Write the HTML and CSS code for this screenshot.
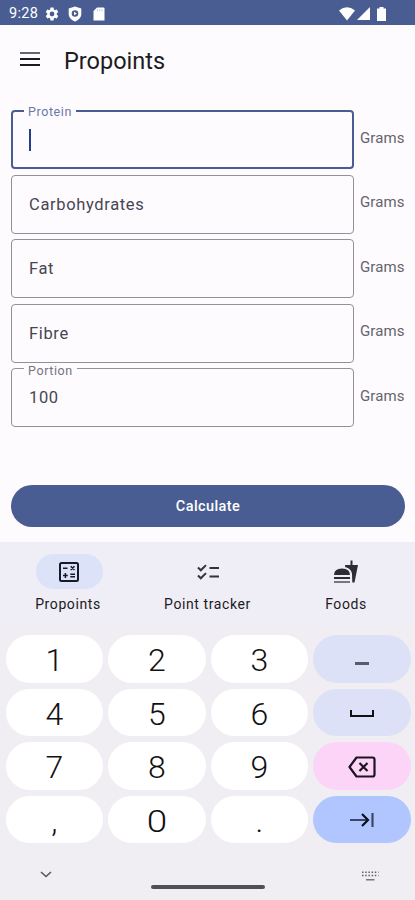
FILE: index.html
```html
<!DOCTYPE html>
<html lang="en">
<head>
    <meta charset="UTF-8">
    <meta name="viewport" content="width=device-width, initial-scale=1.0">
    <title>Propoints</title>
    <link rel="stylesheet" href="styles.css">
</head>
<body>

<div class="status-bar">
    <span class="clock">9:28</span>
    <svg class="gear" width="16" height="16" viewBox="0 0 24 24" fill="#fff"><path d="M19.14 12.94c.04-.3.06-.61.06-.94s-.02-.64-.07-.94l2.03-1.58a.5.5 0 0 0 .12-.61l-1.92-3.32a.5.5 0 0 0-.59-.22l-2.39.96c-.5-.38-1.03-.7-1.62-.94l-.36-2.54a.48.48 0 0 0-.48-.41h-3.84a.48.48 0 0 0-.47.41l-.36 2.54c-.59.24-1.13.57-1.62.94l-2.39-.96a.5.5 0 0 0-.59.22L2.74 8.87a.5.5 0 0 0 .12.61l2.03 1.58c-.05.3-.09.63-.09.94s.02.64.07.94l-2.03 1.58a.5.5 0 0 0-.12.61l1.92 3.32c.12.22.37.29.59.22l2.39-.96c.5.38 1.03.7 1.62.94l.36 2.54c.05.24.24.41.48.41h3.84c.24 0 .44-.17.47-.41l.36-2.54c.59-.24 1.13-.56 1.62-.94l2.39.96c.22.08.47 0 .59-.22l1.92-3.32a.5.5 0 0 0-.12-.61l-2.01-1.58zM12 15.6a3.6 3.6 0 1 1 0-7.2 3.6 3.6 0 0 1 0 7.2z"/></svg>
    <svg class="shield" width="14" height="16" viewBox="0 0 14 16"><path fill="#fff" d="M7 0.5L13.3 2.6V8C13.3 11.5 10.500 14.300 7 15.500C3.500 14.300 0.700 11.500 0.700 8V2.600Z"/><circle cx="7" cy="7.500" r="3.300" fill="#495d92"/><path fill="#fff" d="M6 5.800L9 7.500L6 9.200Z"/></svg>
    <svg class="card" width="12" height="14" viewBox="0 0 12 14"><path fill="#fff" d="M4 0.500H10.500Q11.500 0.500 11.500 1.500V13.500H0.500V4Z"/><path stroke="#c9d0e3" stroke-width="1" d="M4.500 2V4.500M6.800 2V4.500M9 2V4.500"/></svg>
    <div class="status-right">
        <svg width="16" height="14" viewBox="0 0 16 14"><path fill="#fff" d="M0 3.500Q8 -2.800 16 3.500L8 13.500Z"/></svg>
        <svg width="13" height="13" viewBox="0 0 13 13"><path fill="#fff" d="M13 0V13H0Z"/></svg>
        <svg class="battery" width="9" height="14" viewBox="0 0 9 14"><path fill="#fff" d="M2.500 0H6.500V1.500H9V14H0V1.500H2.500Z"/></svg>
    </div>
</div>

<header class="toolbar">
    <svg width="20" height="14" viewBox="0 0 20 14" fill="#1b1b21"><path fill="#66666c" d="M0 0h20v2H0z"/><path d="M0 6h20v2H0zM0 12h20v2H0z"/></svg>
    <h1>Propoints</h1>
</header>

<main class="form">
    <div class="form-row">
        <div class="field active"><label>Protein</label><span class="caret"></span></div>
        <span class="unit">Grams</span>
    </div>
    <div class="form-row">
        <div class="field">Carbohydrates</div>
        <span class="unit">Grams</span>
    </div>
    <div class="form-row">
        <div class="field">Fat</div>
        <span class="unit">Grams</span>
    </div>
    <div class="form-row">
        <div class="field">Fibre</div>
        <span class="unit">Grams</span>
    </div>
    <div class="form-row">
        <div class="field"><label>Portion</label>100</div>
        <span class="unit">Grams</span>
    </div>
    <button class="calculate">Calculate</button>
</main>

<nav class="bottom-nav">
    <div class="nav-item selected">
        <span class="nav-icon">
            <svg width="20" height="20" viewBox="0 0 20 20" fill="none" stroke="#161b2c"><rect x="1" y="1" width="18" height="18" rx="1.500" stroke-width="2"/><path stroke-width="1.500" d="M4 6.300h4.500M11.700 4.200l3.800 3.800M15.500 4.200l-3.800 3.800M4 13.500h4.800M6.400 11.100v4.800M11.300 12.300h4.700M11.300 14.700h4.700"/></svg>
        </span>
        <span class="nav-label">Propoints</span>
    </div>
    <div class="nav-item tracker">
        <span class="nav-icon">
            <svg width="22" height="16" viewBox="0 0 22 16" fill="none" stroke="#33333a" stroke-width="2"><path d="M1 3.500l2.800 2.800L9 1.100M1 11.500l2.800 2.800L9 9.100M12.500 4H22M12.500 12.500H22"/></svg>
        </span>
        <span class="nav-label">Point tracker</span>
    </div>
    <div class="nav-item foods">
        <span class="nav-icon">
            <svg width="24" height="24" viewBox="0 0 24 24" fill="#2c2c33"><path d="M0 15Q0 8.500 8 8.500T16 15z"/><path d="M0 17h16v2H0z"/><path fill="#77777e" d="M0 21h16v2H0z"/><path d="M18.300 22.500H20.500L24 5H18.500V0.500H16.500V5H11L11.300 7.300C15 8 17.700 10.500 18 14z"/></svg>
        </span>
        <span class="nav-label">Foods</span>
    </div>
</nav>

<section class="keyboard">
    <div class="keys">
        <div class="key">1</div>
        <div class="key">2</div>
        <div class="key">3</div>
        <div class="key tonal minus"><svg width="14" height="3" viewBox="0 0 14 3"><path fill="#575c6f" d="M0 0h14v3H0z"/></svg></div>
        <div class="key">4</div>
        <div class="key">5</div>
        <div class="key">6</div>
        <div class="key tonal"><svg class="space" width="24" height="7" viewBox="0 0 24 7"><path fill="none" stroke="#111" stroke-width="2" d="M1 0v6h22V0"/></svg></div>
        <div class="key">7</div>
        <div class="key">8</div>
        <div class="key">9</div>
        <div class="key delete"><svg width="28" height="22" viewBox="0 0 28 22" fill="none" stroke="#1d1420" stroke-width="2.200"><path stroke-linejoin="round" d="M8.500 1.500H24.500Q26.500 1.500 26.500 3.500V18.500Q26.500 20.500 24.500 20.500H8.500L1.500 11Z"/><path d="M11.500 7l8 8M19.500 7l-8 8"/></svg></div>
        <div class="key">,</div>
        <div class="key zero"><span>0</span></div>
        <div class="key">.</div>
        <div class="key next"><svg width="24" height="14" viewBox="0 0 24 14" fill="none" stroke-width="2.200"><path stroke="#3c4766" d="M0 7h17M22.500 0v14"/><path stroke="#0b1020" d="M12 1l6 6-6 6"/></svg></div>
    </div>
    <div class="system-bar">
        <svg width="12" height="7" viewBox="0 0 12 7"><path fill="none" stroke="#55555a" stroke-width="1.500" d="M1 1l5 4.500L11 1"/></svg>
        <div class="home-handle"></div>
        <svg width="18" height="10" viewBox="0 0 18 10"><path stroke="#606066" stroke-width="1.500" stroke-dasharray="1.500 1.700" d="M1 1.200h16.500M1 4.500h16.500"/><path stroke="#606066" stroke-width="1.300" d="M5 8.800h8.500"/></svg>
    </div>
</section>

</body>
</html>
```

FILE: styles.css
```css
body {
    font-family: Roboto, sans-serif;
    margin: 0;
    height: 900px;
    display: flex;
    flex-direction: column;
    background-color: #fefbff;
    color: #1b1b21;
    overflow: hidden;
}
svg {
    display: block;
    flex: none;
}
.status-bar {
    height: 25px;
    box-sizing: border-box;
    padding: 2px 29px 0 9px;
    display: flex;
    align-items: center;
    background-color: #495d92;
    color: white;
}
.clock {
    width: 35px;
    font-size: 14.5px;
    letter-spacing: 0.3px;
}
.shield {
    margin-left: 8px;
}
.card {
    margin-left: 11px;
}
.status-right {
    margin-left: auto;
    display: flex;
    align-items: center;
    gap: 2px;
}
.battery {
    margin-left: 5px;
}
.toolbar {
    height: 85px;
    box-sizing: border-box;
    padding: 20px 20px 0;
    display: flex;
    align-items: flex-start;
}
.toolbar svg {
    margin-top: 7px;
}
.toolbar h1 {
    margin: 0 0 0 24px;
    font-size: 23.5px;
    font-weight: 380;
    line-height: 32px;
    letter-spacing: 0;
}
.form {
    height: 432px;
    padding: 0 10px 0 11px;
}
.form-row {
    height: 64.5px;
    display: flex;
}
.field {
    position: relative;
    flex: none;
    width: 343px;
    height: 59px;
    box-sizing: border-box;
    padding-left: 17px;
    display: flex;
    align-items: center;
    border: 1px solid #919199;
    border-radius: 4px;
    font-size: 16.5px;
    letter-spacing: 0.65px;
    color: #46464f;
}
.field.active {
    padding-left: 16px;
    border: 2px solid #495d92;
}
.field label {
    position: absolute;
    top: -6px;
    left: 12px;
    padding: 0 4px;
    background-color: #fefbff;
    font-size: 12.5px;
    line-height: 15px;
    letter-spacing: 0.6px;
    color: #74747d;
}
.field.active label {
    top: -8px;
    left: 11px;
    color: #6878a8;
}
.caret {
    width: 2px;
    height: 22px;
    background-color: #23408c;
}
.unit {
    margin: 17.5px 0 0 6px;
    font-size: 15px;
    line-height: 20px;
    letter-spacing: 0.1px;
    color: #64646b;
}
.calculate {
    display: block;
    width: 394px;
    height: 42px;
    margin-top: 52px;
    padding: 2px 0 0;
    border: none;
    border-radius: 21px;
    background-color: #495d92;
    color: white;
    font-family: inherit;
    font-size: 14.5px;
    font-weight: 500;
    letter-spacing: 0.4px;
}
.bottom-nav {
    height: 84px;
    box-sizing: border-box;
    padding-top: 12px;
    display: grid;
    grid-template-columns: 138px 139px 138px;
    background-color: #efedf6;
}
.nav-item {
    display: flex;
    flex-direction: column;
    align-items: center;
    gap: 7px;
    font-size: 14px;
    font-weight: 450;
    line-height: 17px;
    letter-spacing: 0.6px;
}
.nav-icon {
    width: 67px;
    height: 35px;
    display: flex;
    align-items: center;
    justify-content: center;
    border-radius: 17.5px;
}
.selected .nav-icon {
    background-color: #dce3f9;
}
.selected .nav-label {
    margin-right: 2px;
}
.keyboard {
    height: 274px;
    background-color: #f0eef3;
}
.keys {
    padding: 9px 4.5px 0 5.5px;
    display: grid;
    grid-template-columns: repeat(4, 1fr);
    grid-auto-rows: 47.5px;
    gap: 6px 5px;
}
.key {
    box-sizing: border-box;
    padding-top: 4px;
    display: flex;
    align-items: center;
    justify-content: center;
    border-radius: 24px;
    background-color: white;
    font-size: 32px;
    font-weight: 350;
    line-height: 43px;
    color: #111;
}
.zero span {
    transform: scaleX(1.15);
}
.tonal {
    padding-top: 2px;
    background-color: #dce1f8;
}
.minus {
    padding-top: 10px;
}
.delete {
    padding-top: 2px;
    background-color: #fcd4f7;
}
.next {
    padding-top: 1px;
    background-color: #b1c5ff;
}
.system-bar {
    padding: 28px 36px 0 40px;
    display: flex;
    justify-content: space-between;
}
.home-handle {
    width: 114px;
    height: 4px;
    margin: 14px 0 0 2px;
    border-radius: 2px;
    background-color: #505054;
}
```
